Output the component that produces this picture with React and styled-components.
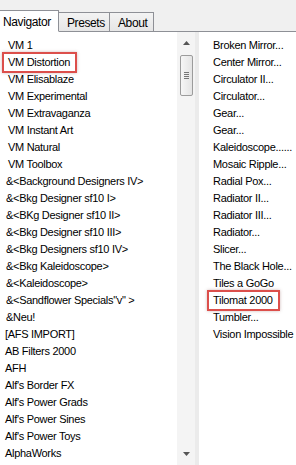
import React from 'react';
import styled, { createGlobalStyle } from 'styled-components';

const Global = createGlobalStyle`
  html, body { margin: 0; padding: 0; background: #fff; }
  body { font-family: "Liberation Sans", Arial, sans-serif; font-size: 11px; color: #000; }
`;

const leftItems = [
  'VM 1', 'VM Distortion', 'VM Elisablaze', 'VM Experimental', 'VM Extravaganza',
  'VM Instant Art', 'VM Natural', 'VM Toolbox', '&<Background Designers IV>',
  '&<Bkg Designer sf10 I>', '&<BKg Designer sf10 II>', '&<Bkg Designer sf10 III>',
  '&<Bkg Designers sf10 IV>', '&<Bkg Kaleidoscope>', '&<Kaleidoscope>',
  '&<Sandflower Specials"v" >', '&Neu!', '[AFS IMPORT]', 'AB Filters 2000', 'AFH',
  "Alf's Border FX", "Alf's Power Grads", "Alf's Power Sines", "Alf's Power Toys", 'AlphaWorks',
];

const rightItems = [
  'Broken Mirror...', 'Center Mirror...', 'Circulator II...', 'Circulator...', 'Gear...',
  'Gear...', 'Kaleidoscope......', 'Mosaic Ripple...', 'Radial Pox...', 'Radiator II...',
  'Radiator III...', 'Radiator...', 'Slicer...', 'The Black Hole...', 'Tiles a GoGo',
  'Tilomat 2000', 'Tumbler...', 'Vision Impossible',
];

const App = () => {
  return (
    <Window>
      <Global />
      <TabStrip>
        <Tab $active>Navigator</Tab>
        <Tab>Presets</Tab>
        <Tab>About</Tab>
      </TabStrip>
      <Panel>
        <LeftList>
          {leftItems.map((t, i) => (
            <Item key={i} $pad={t.startsWith('&') ? 6 : t.startsWith('[') || t.startsWith('A') ? 5 : 8}>
              <Label $marked={t === 'VM Distortion'}>{t}</Label>
            </Item>
          ))}
        </LeftList>
        <Scrollbar>
          <Arrow>
            <svg width="7" height="4" viewBox="0 0 7 4"><path d="M0 4 L3.5 0 L7 4 Z" fill="#555" /></svg>
          </Arrow>
          <Thumb>
            <Grip>
              <span /><span /><span /><span />
            </Grip>
          </Thumb>
          <Track />
          <Arrow>
            <svg width="7" height="4" viewBox="0 0 7 4"><path d="M0 0 L7 0 L3.5 4 Z" fill="#555" /></svg>
          </Arrow>
        </Scrollbar>
        <RightList>
          {rightItems.map((t, i) => (
            <Item key={i} $pad={0}>
              <Label $marked={t === 'Tilomat 2000'}>{t}</Label>
            </Item>
          ))}
        </RightList>
      </Panel>
    </Window>
  );
};

export default App;

const Window = styled.div`
  width: 296px;
  height: 465px;
  display: flex;
  flex-direction: column;
  overflow: hidden;
  background: #fff;
`;

const TabStrip = styled.div`
  height: 31px;
  flex: none;
  display: flex;
  align-items: flex-end;
  background: #f0f0f0;
  border-bottom: 1px solid #8e9096;
`;

const Tab = styled.div`
  box-sizing: border-box;
  height: ${p => (p.$active ? '22px' : '19px')};
  margin-bottom: ${p => (p.$active ? '-1px' : '0')};
  padding: ${p => (p.$active ? '4px 6px 0 3px' : '3px 6px 0 8px')};
  margin-left: ${p => (p.$active ? '0' : '-1px')};
  border: 1px solid #8e9096;
  border-bottom: ${p => (p.$active ? '1px solid #fff' : 'none')};
  background: ${p => (p.$active ? '#fff' : 'linear-gradient(#f3f3f3, #e6e6e6)')};
  font-size: 12px;
  letter-spacing: -0.4px;
  line-height: 14px;
  white-space: nowrap;
  &:first-child { border-left: none; width: 59px; }
  &:nth-child(2) { width: 52px; }
  &:nth-child(3) { width: 45px; }
`;

const Panel = styled.div`
  flex: 1;
  display: flex;
  min-height: 0;
`;

const LeftList = styled.div`
  width: 177px;
  flex: none;
  padding-top: 5px;
`;

const RightList = styled.div`
  flex: 1;
  padding: 5px 0 0 14px;
  white-space: nowrap;
`;

const Item = styled.div`
  height: 17px;
  line-height: 17px;
  padding-left: ${p => p.$pad}px;
  white-space: nowrap;
  letter-spacing: -0.3px;
`;

const Label = styled.span`
  display: inline-block;
  height: 17px;
  ${p => p.$marked && `
    padding: 0 5px 0 4px;
    margin-left: -4px;
    box-shadow: 0 0 0 2px #dc4f4b, 0 0 3px 2px rgba(120, 60, 60, 0.35);
  `}
`;

const Scrollbar = styled.div`
  width: 18px;
  flex: none;
  display: flex;
  flex-direction: column;
  align-items: center;
  background: #f4f4f4;
  border-right: 4px solid #ebebeb;
`;

const Arrow = styled.div`
  height: 22px;
  width: 100%;
  display: flex;
  align-items: center;
  justify-content: center;
  flex: none;
`;

const Thumb = styled.div`
  box-sizing: border-box;
  width: 13px;
  height: 41px;
  margin-top: 1px;
  flex: none;
  border: 1px solid #9c9c9c;
  border-radius: 2px;
  background: linear-gradient(90deg, #f6f6f6, #e4e4e4);
  display: flex;
  align-items: center;
  justify-content: center;
`;

const Grip = styled.div`
  display: flex;
  flex-direction: column;
  gap: 1px;
  span {
    display: block;
    width: 5px;
    height: 1px;
    background: #777;
  }
`;

const Track = styled.div`
  flex: 1;
`;
